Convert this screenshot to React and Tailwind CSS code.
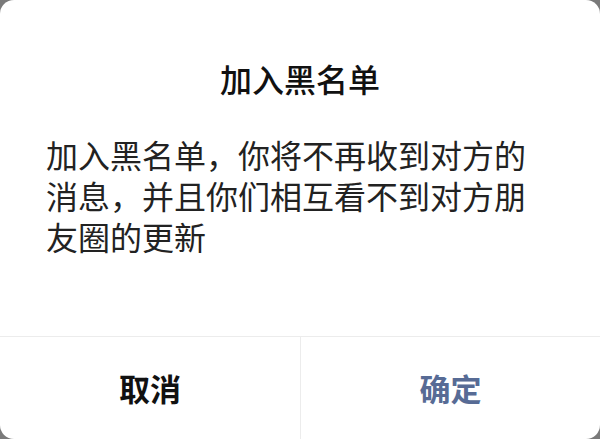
import React from "react";

const font = { fontFamily: '"Noto Sans CJK SC", "Noto Sans", sans-serif' };

const BlacklistDialog = ({ title, message, onCancel, onConfirm }) => {
  return (
    <div className="flex h-[439px] w-[600px] flex-col overflow-hidden rounded-[14px] bg-white" style={font}>
      <div className="pt-[58px] text-center text-[32px] font-medium leading-[40px] text-[#111]">
        {title}
      </div>
      <p className="mt-[36px] pl-[46px] pr-[60px] text-[32px] leading-[41px] text-[#222]">
        {message}
      </p>
      <div className="flex-1" />
      <div className="grid h-[103px] grid-cols-2 border-t border-[#ececec]">
        <button
          className="text-[31px] font-bold text-[#111]"
          onClick={onCancel}
        >
          取消
        </button>
        <button
          className="border-l border-[#ececec] text-[31px] font-bold text-[#576b95]"
          onClick={onConfirm}
        >
          确定
        </button>
      </div>
    </div>
  );
};

export default function App() {
  return (
    <div className="h-[439px] w-[600px] bg-[#7a7a7a]">
      <BlacklistDialog
        title="加入黑名单"
        message="加入黑名单，你将不再收到对方的消息，并且你们相互看不到对方朋友圈的更新"
        onCancel={() => {}}
        onConfirm={() => {}}
      />
    </div>
  );
}
